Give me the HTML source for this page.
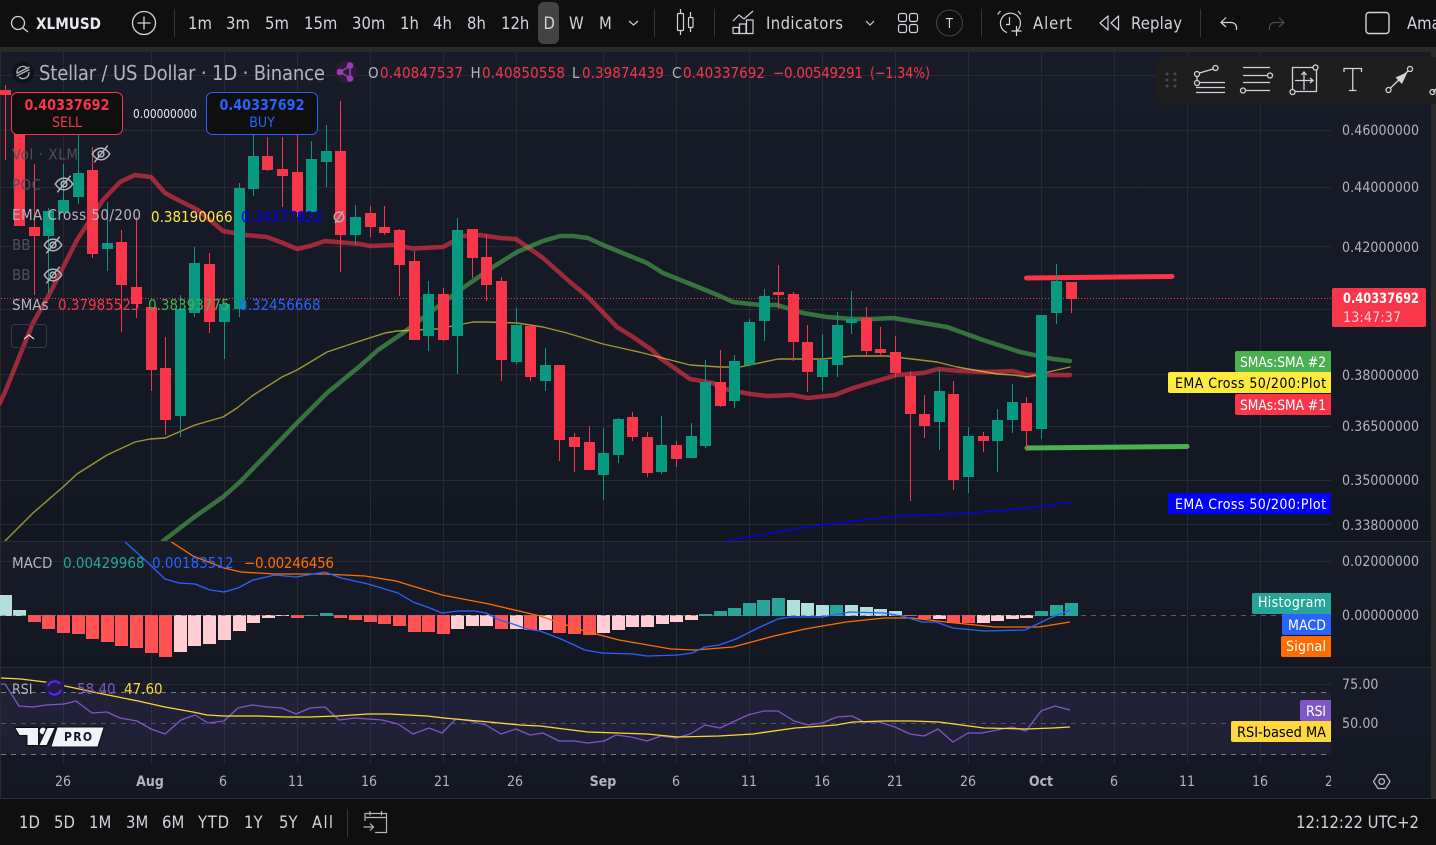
<!DOCTYPE html>
<html><head><meta charset="utf-8"><title>XLMUSD</title>
<style>
html,body{margin:0;padding:0;background:#0f0f0f;width:1436px;height:845px;overflow:hidden}
svg{display:block;position:absolute;left:0;top:0}
text{font-family:"DejaVu Sans Condensed","DejaVu Sans","Liberation Sans",sans-serif;font-stretch:condensed;white-space:pre}
.tb{font-size:16.5px;fill:#d1d4dc}
.ax{font-size:14px;fill:#b2b5be;letter-spacing:.1px}
.tm{font-size:14px;fill:#b2b5be;text-anchor:middle}
.lg{font-size:15px;fill:#b2b5be}
.dim{font-size:15px;fill:#4f5156}
.pl{font-size:14px;fill:#fff}
.rg{font-size:16.5px;fill:#d1d4dc}
.ic{fill:none;stroke:#d1d4dc;stroke-width:1.300}
.og{font-size:15px;fill:#b2b5be}
.or{font-size:15px;fill:#f7364a}
</style></head><body>
<svg width="1436" height="845" viewBox="0 0 1436 845" xmlns="http://www.w3.org/2000/svg">
<defs>
<linearGradient id="g1" x1="0" y1="0" x2="0" y2="1"><stop offset="0" stop-color="#181c29"/><stop offset="1" stop-color="#131722"/></linearGradient>
<clipPath id="cm"><rect x="0" y="52" width="1331" height="489"/></clipPath>
<clipPath id="cd"><rect x="0" y="542" width="1331" height="125"/></clipPath>
<symbol id="eye" viewBox="0 0 24 24" overflow="visible"><path d="M1.500 12C5 6.500 8.500 5 12 5s7 1.500 10.500 7C19 17.500 15.500 19 12 19S5 17.500 1.500 12Z" fill="none" stroke="#b2b5be" stroke-width="1.800"/><circle cx="12" cy="12" r="3.500" fill="none" stroke="#b2b5be" stroke-width="1.800"/><path d="M4 22L20 2" stroke="#b2b5be" stroke-width="1.800"/></symbol>
</defs>
<rect x="0" y="0" width="1436" height="845" fill="#0f0f0f"/>
<rect x="0" y="47" width="1436" height="5" fill="#2a2a2a"/>
<rect x="0" y="47" width="1" height="751" fill="#2a2a2a"/>
<rect x="1431" y="47" width="5" height="751" fill="#2a2a2a"/>
<rect x="1" y="52" width="1430" height="489" fill="url(#g1)"/>
<rect x="1" y="542" width="1430" height="125" fill="url(#g1)"/>
<rect x="1" y="668" width="1430" height="130" fill="url(#g1)"/>
<path d="M0 541.500H1431M0 667.500H1431M0 798.500H1436" stroke="#2a2e39" stroke-width="1"/>

<!-- grid -->
<path d="M1 75.500H1331M1 130.500H1331M1 187.500H1331M1 246.500H1331M1 309.500H1331M1 374.500H1331M1 426.500H1331M1 480.500H1331M1 524.500H1331M1 561.500H1331M1 684.500H1331" stroke="#262a35" stroke-width="1"/>
<path d="M63.500 52V763M151.500 52V763M224.500 52V763M297.500 52V763M370.500 52V763M443.500 52V763M516.500 52V763M603.500 52V763M676.500 52V763M749.500 52V763M822.500 52V763M895.500 52V763M968.500 52V763M1041.500 52V763M1114.500 52V763M1187.500 52V763M1260.500 52V763" stroke="#262a35" stroke-width="1"/>

<!-- RSI band -->
<rect x="1" y="692.500" width="1330" height="62" fill="#7e57c2" fill-opacity=".1"/>
<path d="M1 692.500H1331M1 754.500H1331" stroke="#787b86" stroke-width="1" stroke-dasharray="5 5"/>
<path d="M1 723.500H1331" stroke="#787b86" stroke-opacity=".55" stroke-width="1" stroke-dasharray="5 5"/>

<!-- MA lines -->
<g clip-path="url(#cm)" fill="none" stroke-linejoin="round" stroke-linecap="round">
<polyline stroke="#f7364a" stroke-opacity=".6" stroke-width="4.500" points="0,403 5,392 22,350 33,323 50,293 77,240 103,200 120,182 135,175 151,177 165,193 180,201 198,210 210,220 223,231 245,235 267,237 283,243 297,249 310,246 325,241 360,244 370,246 393,245 413,248.500 443,247 463,236 480,235 500,238 516,239 543,258 570,282 588,297 617,327 633,337 652,350 660,358 690,379 713,383 720,388 750,394 767,396 792,395 808,398 835,395 853,388 880,380 897,375 923,373 938,369 960,371 987,372 1013,371 1027,375 1070,375"/>
<polyline stroke="#4caf50" stroke-opacity=".6" stroke-width="4.500" points="163,541 193,518 223,497 240,482 297,423 327,393 360,366 378,350 403,333 420,320 460,290 493,267 517,252 543,241 560,236 573,236 588,238 603,245 647,263 663,273 693,285 720,296 733,302 760,305 777,305 803,313 827,317 853,319 873,319 893,318 923,323 947,327 983,340 1020,352 1053,359 1070,361"/>
<polyline stroke="#ffeb3b" stroke-opacity=".6" stroke-width="1.400" points="5,541 33,513 63,487 77,474 107,455 135,442 150,439 165,438 195,425 223,417 237,408 252,396 282,377 297,370 327,352 360,341 385,333 397,331 437,329 473,322 487,322 517,323 543,327 567,333 603,344 630,350 643,353 690,365 720,367 740,367 778,359 823,359 853,356 887,356 937,362 957,367 997,374 1013,375 1027,377 1070,367"/>
<polyline stroke="#0000ff" stroke-width="1.300" points="725,541 760,535 800,528 860,520 900,516 960,513.500 1010,510 1071,502.500"/>
</g>
<path d="M1026.500 278L1172 276.500" stroke="#f7364a" stroke-width="5" stroke-linecap="round" fill="none"/>
<path d="M1027 448L1187 446.500" stroke="#4caf50" stroke-width="5" stroke-linecap="round" fill="none"/>

<!-- dotted last price -->
<path d="M1 298.500H1331" stroke="#f7364a" stroke-width="1" stroke-dasharray="1 2"/>

<!-- candles -->
<g clip-path="url(#cm)" fill="none" shape-rendering="crispEdges">
<path stroke="#f7364a" stroke-width="1" d="M5.500 85V160M19.500 92V226M34.500 164V295M92.500 147V258M121.500 230V332M136.500 217V318M151.500 307V391M165.500 337V435M209.500 253V333M267.500 137V171M282.500 137V207M297.500 135V217M340.500 101V272M370.500 206V237M384.500 206V235M399.500 229V296M414.500 251V340M443.500 288V341M472.500 229V278M486.500 234V301M501.500 277V381M530.500 326V381M559.500 365V461M574.500 433V472M589.500 426V470M632.500 412V441M647.500 432V477M676.500 441V467M720.500 350V407M778.500 265V309M793.500 292V361M807.500 325V392M866.500 307V357M880.500 327V356M895.500 336V377M910.500 371V501M924.500 395V438M953.500 381V490M983.500 432V452M1026.500 397V451M1071.500 282V313"/>
<path stroke="#089981" stroke-width="1" d="M48.500 208V293M63.500 164V214M78.500 135V204M107.500 202V271M180.500 295V437M194.500 247V317M224.500 304V359M239.500 183V317M253.500 135V196M311.500 141V217M326.500 125V187M355.500 205V245M428.500 281V351M457.500 218V374M516.500 308V364M545.500 348V391M603.500 428V500M618.500 418V463M661.500 416V474M691.500 423V458M705.500 360V448M734.500 355V408M749.500 319V365M764.500 289V341M822.500 334V391M837.500 312V377M851.500 291V334M939.500 369V450M968.500 427V493M997.500 409V472M1012.500 384V433M1041.500 315V439M1056.500 264V324"/>
<path stroke="#f7364a" stroke-width="11" d="M5.500 90V95M19.500 120V226M34.500 227V236M92.500 170V254M121.500 242V285M136.500 287V304M151.500 307V370M165.500 368V420M209.500 264V322M267.500 156V170M282.500 169V176M297.500 172V212M340.500 151V235M370.500 213V227M384.500 227V233M399.500 230V265M414.500 261V340M443.500 294V340M472.500 229V258M486.500 257V285M501.500 281V360M530.500 326V377M559.500 365V440M574.500 437V447M589.500 442V470M632.500 417V437M647.500 437V473M676.500 445V459M720.500 382V406M778.500 292V295M793.500 294V342M807.500 342V372M866.500 318V351M880.500 349V353M895.500 352V373M910.500 376V414M924.500 414V426M953.500 394V480M983.500 436V441M1026.500 403V431M1071.500 282V299"/>
<path stroke="#089981" stroke-width="11" d="M48.500 211V236M63.500 200V212M78.500 173V197M107.500 243V249M180.500 309V416M194.500 263V313M224.500 304V322M239.500 188V309M253.500 156V189M311.500 159V212M326.500 151V162M355.500 217V235M428.500 294V336M457.500 230V336M516.500 325V362M545.500 365V381M603.500 453V475M618.500 419V455M661.500 445V472M691.500 436V458M705.500 382V446M734.500 361V401M749.500 322V365M764.500 296V321M822.500 360V377M837.500 325V365M851.500 319V323M939.500 391V422M968.500 436V477M997.500 420V441M1012.500 402V420M1041.500 315V429M1056.500 281V313"/>
</g>

<!-- MACD histogram -->
<g clip-path="url(#cd)" fill="none" shape-rendering="crispEdges">
<path stroke="#b2dfdb" stroke-width="13" d="M5.500 595V616M19.500 610V616M793.500 600V616M807.500 603V616M822.500 605V616M851.500 605V616M866.500 607V616M880.500 609V616M895.500 611V616"/>
<path stroke="#ff5252" stroke-width="13" d="M34.500 615V622M48.500 615V629M63.500 615V633M78.500 615V634M92.500 615V639M107.500 615V642M121.500 615V646M136.500 615V648M151.500 615V653M165.500 615V657M297.500 615V618M340.500 615V618M355.500 615V620M370.500 615V622M384.500 615V624M399.500 615V626M414.500 615V632M428.500 615V632M443.500 615V634M501.500 615V629M530.500 615V630M559.500 615V633M574.500 615V634M589.500 615V635M910.500 615V616M924.500 615V619M953.500 615V623M968.500 615V623"/>
<path stroke="#ffcdd2" stroke-width="13" d="M180.500 615V652M194.500 615V646M209.500 615V644M224.500 615V640M239.500 615V631M253.500 615V623M268.500 615V618M282.500 615V616M457.500 615V629M472.500 615V626M486.500 615V626M516.500 615V629M545.500 615V630M603.500 615V633M618.500 615V630M632.500 615V627M647.500 615V627M662.500 615V624M676.500 615V622M691.500 615V620M939.500 615V619M983.500 615V623M997.500 615V621M1012.500 615V619M1026.500 615V618"/>
<path stroke="#26a69a" stroke-width="13" d="M311.500 615V616M326.500 613V616M705.500 614V616M720.500 611V616M734.500 608V616M749.500 603V616M763.500 600V616M778.500 598V616M836.500 605V616M1041.500 611V616M1056.500 605V616M1071.500 603V616"/>
</g>
<path d="M1 615.500H1331" stroke="#787b86" stroke-opacity=".7" stroke-width="1" stroke-dasharray="5 5"/>
<g clip-path="url(#cd)" fill="none" stroke-linejoin="round">
<polyline stroke="#ff6d00" stroke-width="1.300" points="170,541 193,556 224,568 241,572 275,574 325,574 365,576 396,581 442,595 489,604 540,616 581,630 619,640 671,649 695,650 733,647 774,636 805,629 846,622 884,618 912,618 946,622 995,627 1039,627 1070,622"/>
<polyline stroke="#2962ff" stroke-width="1.300" points="124,541 145,560 165,579 179,583 195,584 210,590 224,592 238,588 253,580 275,575 296,577 325,572 341,578 368,584 398,593 413,602 430,608 442,613 458,611 475,611 486,613 499,620 513,624 527,629 540,631 561,639 585,650 602,653 633,654 647,656 678,655 692,653 705,647 719,645 736,639 760,627 778,619 791,617 822,617 850,612 884,613 902,616 922,622 936,622 953,628 984,631 1025,630 1050,618 1070,610"/>
</g>

<!-- RSI lines -->
<g fill="none" stroke-linejoin="round">
<polyline stroke="#7e57c2" stroke-width="1.300" points="1,684 5,684 19,706 33,707 46,705 64,704 76,701 92,713 107,712 120,718 137,721 151,729 165,734 181,720 195,715 208,723 224,721 238,708 252,705 267,707 282,708 296,714 310,708 325,707 339,720 355,718 382,720 398,724 413,734 429,728 442,733 456,719 470,721 486,725 501,734 516,729 530,735 543,733 559,741 574,741 588,743 604,741 616,735 631,737 647,741 661,736 676,738 690,734 705,725 720,728 735,721 748,715 764,711 778,711 794,721 808,725 822,723 837,717 852,716 864,722 879,722 895,727 910,734 924,736 938,729 953,742 968,733 982,733 1012,727 1026,731 1041,711 1055,706 1070,710"/>
<polyline stroke="#fdd835" stroke-width="1.300" points="1,678 21,679 45,682 65,686 103,694 138,701 165,707 193,712 207,715 224,716 258,716 286,717 310,717 337,716 368,714 389,714 427,716 444,718 489,722 520,725 540,726 588,732 647,734 678,737 719,736 753,734 795,728 836,725 853,722 884,721 912,721 939,722 984,728 1026,729 1053,728 1070,727"/>
</g>

<!-- TV PRO logo -->
<g fill="#f0f3fa" stroke="#0f0f0f" stroke-width="2.500" paint-order="stroke" stroke-linejoin="round">
<path d="M15.500 728H38V745H27.500V735H19.500Z"/>
<circle cx="43" cy="731" r="3.400"/>
<path d="M39.500 745H46.500L54.500 728H47.500Z"/>
<path d="M57.500 727.500H103.500L97.500 746.500H51.500Z"/>
</g>
<text x="64" y="741" style="font-size:12px;font-weight:bold;fill:#131722;letter-spacing:1.300px;font-stretch:normal">PRO</text>

<!-- top bar -->
<rect x="538" y="2" width="21" height="42" rx="6" fill="#434343"/>
<g fill="none" stroke="#d1d4dc" stroke-width="1.300">
<circle cx="18" cy="23" r="6.500"/><path d="M22.500 27.500L28 32"/>
<circle cx="144" cy="23" r="11.500"/><path d="M137.500 23H150.500M144 16.500V29.500"/>
</g>
<text x="36" y="29" textLength="65" lengthAdjust="spacingAndGlyphs" style="font-size:16px;font-weight:bold;fill:#e6e8ee">XLMUSD</text>
<path d="M174.500 9V37M654.500 9V37M714.500 9V37M981.500 9V37M1200.500 9V37" stroke="#363636"/>
<text class="tb" x="188" y="29">1m</text><text class="tb" x="226" y="29">3m</text><text class="tb" x="265" y="29">5m</text><text class="tb" x="304" y="29">15m</text><text class="tb" x="352" y="29">30m</text><text class="tb" x="400" y="29">1h</text><text class="tb" x="433" y="29">4h</text><text class="tb" x="467" y="29">8h</text><text class="tb" x="501" y="29">12h</text><text class="tb" x="543.500" y="29">D</text><text class="tb" x="569" y="29">W</text><text class="tb" x="599" y="29">M</text>
<text class="tb" x="766" y="29" textLength="77">Indicators</text><text class="tb" x="1033" y="29" textLength="39">Alert</text><text class="tb" x="1131" y="29" textLength="51">Replay</text><text class="tb" x="1407" y="29">Ama</text>
<g fill="none" stroke="#d1d4dc" stroke-width="1.200">
<path d="M629 21L633.500 25L638 21M866 21L870 25L874 21"/>
<rect x="677.500" y="13.500" width="6" height="17" rx="1"/><path d="M680.500 9V13.500M680.500 30.500V35"/>
<rect x="688.500" y="17.500" width="4.500" height="10" rx="1"/><path d="M690.500 12V17.500M690.500 27.500V32"/>
<path d="M733 21L739 15L744 19L753 11"/>
<path d="M733 33.500V27.500H739V33.500M739.500 33.500V24H746V33.500M746.500 33.500V20H753V33.500H733"/>
<rect x="898.500" y="13.500" width="8" height="8" rx="2"/><rect x="909.500" y="13.500" width="8" height="8" rx="2"/><rect x="898.500" y="24.500" width="8" height="8" rx="2"/><rect x="909.500" y="24.500" width="8" height="8" rx="2"/>
<path d="M1016 31.500A10 10 0 1 0 1007 32.600M1009.500 17V24.500H1006M1016.500 26V36M1011.500 31H1021.500M1000.500 11L997.500 14.500M1018 11L1021 14.500"/>
<path d="M1108 16L1100 23L1108 30ZM1118.500 16L1111 23L1118.500 30Z" stroke-linejoin="round"/>
<path d="M1226 17.500L1221 22.500L1226 27M1221 22.500H1231A5 5 0 0 1 1236.500 27.500V30"/>
<path d="M1279 17.500L1284 22.500L1279 27M1284 22.500H1274A5 5 0 0 0 1269.500 27.500V30" stroke="#4a4c52"/>
<rect x="1366" y="12.500" width="23" height="21" rx="3" stroke-width="1.400"/>
</g>
<circle cx="949.500" cy="23" r="13" fill="none" stroke="#434651"/>
<text x="949.500" y="28" text-anchor="middle" style="font-size:13px;fill:#d1d4dc">T</text>

<!-- symbol legend -->
<circle cx="23" cy="72.500" r="11" fill="#101319"/>
<g fill="none" stroke="#b2b5be" stroke-width="1.300"><path d="M17 73A6 6 0 0 1 27 68M29 72A6 6 0 0 1 19 77M16.500 76L29.500 69.500M16.500 73.500L29.500 67"/></g>
<text x="39" y="80" textLength="286" style="font-size:20px;fill:#b2b5be">Stellar / US Dollar · 1D · Binance</text>
<circle cx="346" cy="72" r="11" fill="#2a1c35"/>
<g fill="#9b3db8" stroke="#9b3db8" stroke-width="1.600"><path d="M340 72L350 66M340 72L350 78M350 66V78" fill="none"/><circle cx="340" cy="72" r="2.500"/><circle cx="350" cy="65.500" r="2.500"/><circle cx="350" cy="78.500" r="2.500"/></g>
<text class="og" x="368" y="78">O</text><text class="or" x="380" y="78" textLength="83">0.40847537</text>
<text class="og" x="470.500" y="78">H</text><text class="or" x="482" y="78" textLength="83">0.40850558</text>
<text class="og" x="572" y="78">L</text><text class="or" x="582" y="78" textLength="82">0.39874439</text>
<text class="og" x="672" y="78">C</text><text class="or" x="683" y="78" textLength="82">0.40337692</text>
<text class="or" x="773" y="78" textLength="90">−0.00549291</text><text class="or" x="870" y="78" textLength="60" lengthAdjust="spacingAndGlyphs">(−1.34%)</text>

<!-- buy/sell -->
<rect x="11.500" y="92.500" width="111" height="42" rx="6" fill="#0f0f0f" stroke="#f7364a"/>
<rect x="206.500" y="92.500" width="111" height="42" rx="6" fill="#0f0f0f" stroke="#2962ff"/>
<text x="24.500" y="110" textLength="85" lengthAdjust="spacingAndGlyphs" style="font-size:15px;font-weight:bold;fill:#f7364a">0.40337692</text>
<text x="67" y="127" text-anchor="middle" style="font-size:14px;fill:#f7364a">SELL</text>
<text x="219.500" y="110" textLength="85" lengthAdjust="spacingAndGlyphs" style="font-size:15px;font-weight:bold;fill:#2962ff">0.40337692</text>
<text x="262" y="127" text-anchor="middle" style="font-size:14px;fill:#2962ff">BUY</text>
<text x="133" y="118" textLength="64" lengthAdjust="spacingAndGlyphs" style="font-size:12px;fill:#e6e8ee">0.00000000</text>

<!-- indicator legends -->
<text class="dim" x="12" y="159.500" textLength="66">Vol · XLM</text>
<use href="#eye" x="91" y="144" width="20" height="20"/>
<text class="dim" x="12" y="190" textLength="29">POC</text>
<use href="#eye" x="54" y="174" width="20" height="20"/>
<text class="lg" x="12" y="220" textLength="129">EMA Cross 50/200</text>
<text x="151" y="222" style="font-size:15px;fill:#ffeb3b">0.38190066</text>
<text x="241" y="222" style="font-size:15px;fill:#0000ff">0.34377822</text>
<g fill="none" stroke="#b2b5be" stroke-width="1.300"><circle cx="339" cy="217" r="4.800"/><path d="M335 223L343 211"/></g>
<text class="dim" x="12" y="250">BB</text>
<use href="#eye" x="43" y="235" width="20" height="20"/>
<text class="dim" x="12" y="280">BB</text>
<use href="#eye" x="43" y="265" width="20" height="20"/>
<text class="lg" x="12" y="310">SMAs</text>
<text x="58" y="310" style="font-size:15px;fill:#f7364a">0.37985525</text>
<text x="148" y="310" style="font-size:15px;fill:#4caf50">0.38393775</text>
<text x="239" y="310" style="font-size:15px;fill:#2962ff">0.32456668</text>
<rect x="11.500" y="324.500" width="35" height="23" rx="3" fill="none" stroke="#363a45"/>
<path d="M24 339L29 335L34 339" fill="none" stroke="#d1d4dc" stroke-width="1.300"/>
<text class="lg" x="12" y="568">MACD</text>
<text x="63" y="568" style="font-size:15px;fill:#26a69a">0.00429968</text>
<text x="152" y="568" style="font-size:15px;fill:#2962ff">0.00183512</text>
<text x="244" y="568" textLength="90" style="font-size:15px;fill:#ff6d00">−0.00246456</text>
<text class="lg" x="12" y="694" style="font-size:14px">RSI</text>
<circle cx="54.500" cy="688" r="10" fill="#211c46"/>
<path d="M48 686A7 7 0 0 1 60 684M61 690A7 7 0 0 1 49 692" fill="none" stroke="#651fff" stroke-width="2"/>
<text x="77" y="694" style="font-size:15px;fill:#7e57c2">58.40</text>
<text x="124" y="694" style="font-size:15px;fill:#fdd835">47.60</text>

<!-- drawing toolbar -->
<path d="M1164 57H1436V104H1164A8 8 0 0 1 1156 96V65A8 8 0 0 1 1164 57Z" fill="#1e1e1e"/>
<g fill="#4a4a4a"><circle cx="1167" cy="74" r="1.500"/><circle cx="1175" cy="74" r="1.500"/><circle cx="1167" cy="80" r="1.500"/><circle cx="1175" cy="80" r="1.500"/><circle cx="1167" cy="86" r="1.500"/><circle cx="1175" cy="86" r="1.500"/></g>
<g class="ic">
<circle cx="1215.500" cy="68" r="2.500"/><circle cx="1197" cy="74" r="2.500"/><circle cx="1197" cy="83" r="2.500"/>
<path d="M1199.500 73L1213 69M1200 82.500H1225M1196 87.500H1225M1196 92.500H1225M1197 76.500V80.500"/>
<path d="M1243 67.500H1270M1243 75.500H1267M1243 82.500H1270M1246 90.500H1270"/><circle cx="1270" cy="75.500" r="2.500"/><circle cx="1243" cy="90.500" r="2.500"/>
<path d="M1292.500 89.500V67.500H1313M1316.500 70V91.500H1295M1304 72V90M1295 80.500H1313M1301.500 75L1304 72L1306.500 75M1310 78L1313 80.500L1310 83"/><circle cx="1315.500" cy="67.500" r="2.500"/><circle cx="1292.500" cy="92" r="2.500"/>
<path d="M1344 72V68.500H1361.500V72M1352.750 68.500V90.500M1349 90.500H1356.500"/>
<circle cx="1388.500" cy="90" r="2.500"/><circle cx="1410" cy="69" r="2.500"/><path d="M1390.500 88L1408 71"/>
<path d="M1433 92L1436 89"/><circle cx="1432.500" cy="92" r="2.500"/>
</g>
<path d="M1407.500 72L1402 84L1395.500 77.500Z" fill="#d1d4dc"/>

<!-- price axis -->
<text class="ax" x="1342" y="135">0.46000000</text>
<text class="ax" x="1342" y="192">0.44000000</text>
<text class="ax" x="1342" y="252">0.42000000</text>
<text class="ax" x="1342" y="380">0.38000000</text>
<text class="ax" x="1342" y="431">0.36500000</text>
<text class="ax" x="1342" y="485">0.35000000</text>
<text class="ax" x="1342" y="530">0.33800000</text>
<text class="ax" x="1342" y="566">0.02000000</text>
<text class="ax" x="1342" y="620">0.00000000</text>
<text class="ax" x="1342" y="689">75.00</text>
<text class="ax" x="1342" y="728">50.00</text>

<rect x="1332" y="288" width="94" height="39" rx="2" fill="#f7364a"/>
<text x="1343" y="303" textLength="76" lengthAdjust="spacingAndGlyphs" style="font-size:14px;font-weight:bold;fill:#fff">0.40337692</text>
<text x="1343" y="322" textLength="58" style="font-size:14px;fill:#ffd0d5">13:47:37</text>

<!-- pills -->
<path d="M1237 351H1331V372H1237A2 2 0 0 1 1235 370V353A2 2 0 0 1 1237 351Z" fill="#4caf50"/>
<text class="pl" x="1240" y="367" textLength="86" lengthAdjust="spacingAndGlyphs">SMAs:SMA #2</text>
<path d="M1170 372H1331V393H1170A2 2 0 0 1 1168 391V374A2 2 0 0 1 1170 372Z" fill="#ffeb3b"/>
<text class="pl" x="1175" y="388" textLength="151" style="fill:#000">EMA Cross 50/200:Plot</text>
<path d="M1237 394H1331V415H1237A2 2 0 0 1 1235 413V396A2 2 0 0 1 1237 394Z" fill="#f7364a"/>
<text class="pl" x="1240" y="410" textLength="86" lengthAdjust="spacingAndGlyphs">SMAs:SMA #1</text>
<path d="M1170 493H1331V514H1170A2 2 0 0 1 1168 512V495A2 2 0 0 1 1170 493Z" fill="#0000ff"/>
<text class="pl" x="1175" y="509" textLength="151">EMA Cross 50/200:Plot</text>
<path d="M1254 593H1331V614H1254A2 2 0 0 1 1252 612V595A2 2 0 0 1 1254 593Z" fill="#26a69a"/>
<text class="pl" x="1258" y="607" textLength="68">Histogram</text>
<path d="M1284 614H1331V635H1284A2 2 0 0 1 1282 633V616A2 2 0 0 1 1284 614Z" fill="#2962ff"/>
<text class="pl" x="1288" y="630" textLength="38">MACD</text>
<path d="M1283 636H1331V657H1283A2 2 0 0 1 1281 655V638A2 2 0 0 1 1283 636Z" fill="#ff6d00"/>
<text class="pl" x="1286" y="651" textLength="40">Signal</text>
<path d="M1302 700H1331V721H1302A2 2 0 0 1 1300 719V702A2 2 0 0 1 1302 700Z" fill="#7e57c2"/>
<text class="pl" x="1306" y="716" textLength="20">RSI</text>
<path d="M1233 721H1331V742H1233A2 2 0 0 1 1231 740V723A2 2 0 0 1 1233 721Z" fill="#ffd740"/>
<text class="pl" x="1237" y="737" textLength="89" lengthAdjust="spacingAndGlyphs" style="fill:#000">RSI-based MA</text>

<!-- time axis -->
<text class="tm" x="63" y="786">26</text><text class="tm" x="150" y="786" style="font-weight:bold">Aug</text><text class="tm" x="223" y="786">6</text><text class="tm" x="296" y="786">11</text><text class="tm" x="369" y="786">16</text><text class="tm" x="442" y="786">21</text><text class="tm" x="515" y="786">26</text><text class="tm" x="603" y="786" style="font-weight:bold">Sep</text><text class="tm" x="676" y="786">6</text><text class="tm" x="749" y="786">11</text><text class="tm" x="822" y="786">16</text><text class="tm" x="895" y="786">21</text><text class="tm" x="968" y="786">26</text><text class="tm" x="1041" y="786" style="font-weight:bold">Oct</text><text class="tm" x="1114" y="786">6</text><text class="tm" x="1187" y="786">11</text><text class="tm" x="1260" y="786">16</text>
<svg x="1320" y="770" width="11" height="20"><text x="5" y="16" style="font-size:14px;fill:#b2b5be">2</text></svg>
<g fill="none" stroke="#b2b5be" stroke-width="1.300"><path d="M1373.500 781.500L1378 774.500H1385.500L1390 781.500L1385.500 788.500H1378Z" stroke-linejoin="round"/><circle cx="1381.700" cy="781.500" r="2.800"/></g>

<!-- bottom bar -->
<text class="rg" x="19" y="828">1D</text><text class="rg" x="54" y="828">5D</text><text class="rg" x="89" y="828">1M</text><text class="rg" x="126" y="828">3M</text><text class="rg" x="162" y="828">6M</text><text class="rg" x="198" y="828" textLength="31">YTD</text><text class="rg" x="244" y="828">1Y</text><text class="rg" x="279" y="828">5Y</text><text class="rg" x="312" y="828" textLength="21">All</text>
<path d="M347.500 809V837" stroke="#363636"/>
<g fill="none" stroke="#b2b5be" stroke-width="1.200"><path d="M365 821V813.500H386.500V832.500H375M365 817.500H386.500M370 811V815.500M381.500 811V815.500M363.500 827H373.500M370 823.500L373.500 827L370 830.500"/></g>
<text x="1296" y="828" textLength="123" style="font-size:16.500px;fill:#d1d4dc">12:12:22 UTC+2</text>
</svg>
</body></html>
